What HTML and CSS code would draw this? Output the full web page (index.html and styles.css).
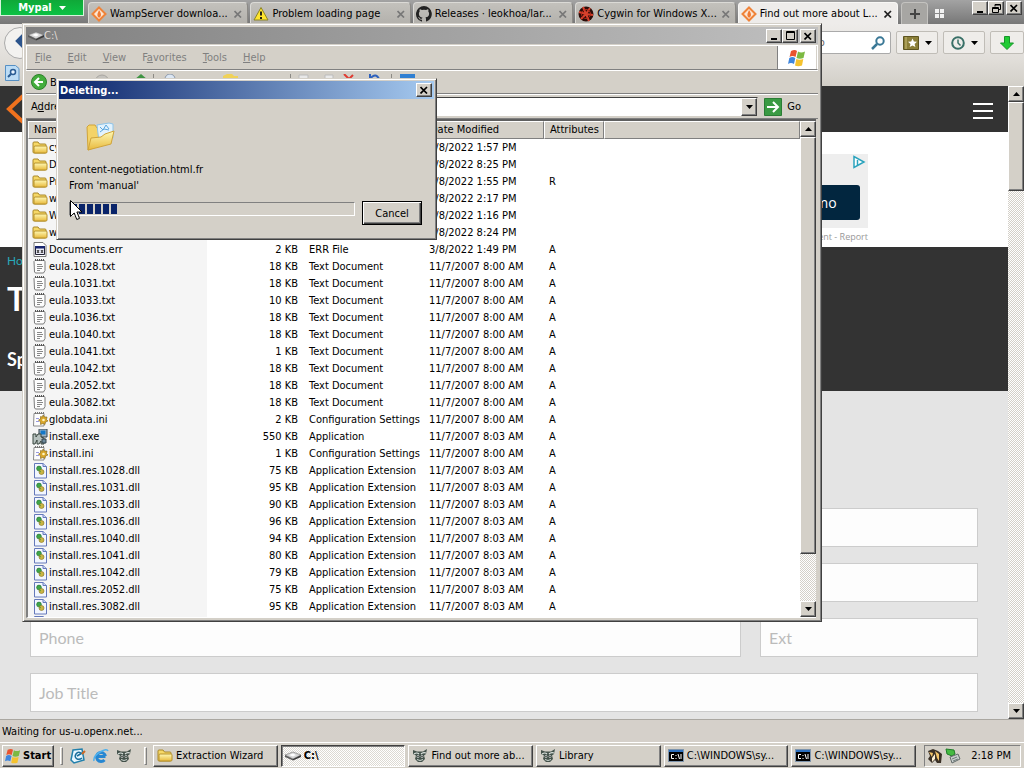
FILE: index.html
```html
<!DOCTYPE html>
<html lang="en">
  <head>
    <meta charset="utf-8">
    <title>Desktop</title>
    <link rel="stylesheet" href="styles.css">
    <meta name="viewport" content="width=device-width, initial-scale=1">
  </head>
  <body>
    <!-- shared icons -->
    <svg class="defs" width="0" height="0">
      <defs>
        <linearGradient id="gold" x1="0" y1="0" x2="0" y2="1">
          <stop offset="0" stop-color="#fff9b5"/>
          <stop offset="1" stop-color="#e8b93c"/>
        </linearGradient>
      </defs>
      <symbol id="folder" viewBox="0 0 16 16">
        <path d="M1 3q0-1 1-1h4l1.500 2H13q1 0 1 1v7q0 1-1 1H2q-1 0-1-1z" fill="#f6d867" stroke="#a8872a"/>
        <path d="M2.500 6H14q1 0 1 1v5q0 1-1 1H3q-1 0-1-1V7z" fill="url(#gold)" stroke="#b8922c"/>
      </symbol>
      <symbol id="errfile" viewBox="0 0 16 16">
        <path d="M2 .5h9l3 3v11H2z" fill="#fff" stroke="#777"/>
        <path d="M3.500 4.500h9v8h-9z" fill="#e8e8f4" stroke="#223"/>
        <path d="M3 4h10v2.500H3z" fill="#17246e"/>
        <path d="M5 8l2 3M7 8l-2 3M9 8l2 3M11 8l-2 3" stroke="#333"/>
      </symbol>
      <symbol id="txt" viewBox="0 0 16 16">
        <path d="M3 1.500h9q1 0 1 1v9l-1.500 2.500H4q-1 0-1.500-1L2 2.500z" fill="#fdfdfd" stroke="#7b7b7b"/>
        <path d="M3.500 0v2M5.500 0v2M7.500 0v2M9.500 0v2M11.500 0v2" stroke="#555"/>
        <path d="M5 5.500h5M5 7.500h6M5 9.500h5M5 11.500h3" stroke="#888"/>
      </symbol>
      <symbol id="ini" viewBox="0 0 16 16">
        <path d="M2 1.500h10v12.500H1.500z" fill="#fdfdfd" stroke="#8a8a8a"/>
        <path d="M3.500 0v2M5.500 0v2M7.500 0v2M9.500 0v2M11.500 0v2" stroke="#777"/>
        <path d="M4 6.500h3M4 9.500h3" stroke="#9a9ae0"/>
        <path d="M11 3l1.500 2H15l-.5 2.500L16 9l-2.500 1-.5 2.500-2-1L8.500 12.500V10l-2-2 2-1V4.500l2 .5z" fill="#d8a62a" stroke="#7e6218" stroke-width=".6"/>
        <circle cx="11.500" cy="8" r="1.300" fill="#fff4c0"/>
      </symbol>
      <symbol id="exe" viewBox="0 0 16 16">
        <path d="M7 0h8v8H7z" fill="#9fb3c2" stroke="#32424d"/>
        <path d="M8.500 1.500h5v4h-5z" fill="#1478c8"/>
        <path d="M1 5h3v3l2-3h3v3l3 1v6H9v-3l-2 3H5v-4l-2 4H1z" fill="#b5c0bd" stroke="#39463f"/>
        <path d="M10 10h4v4h-4z" fill="#6f8b9c" stroke="#32424d"/>
      </symbol>
      <symbol id="dll" viewBox="0 0 16 16">
        <path d="M2.500.5H11L14.500 3.500v11.500h-12z" fill="#f2f6ff" stroke="#6478ba"/>
        <path d="M11 .5v3h3.500" fill="#cad6f6" stroke="#6478ba"/>
        <circle cx="7" cy="5.500" r="2.400" fill="#3fa54a" stroke="#1e6e2b" stroke-width=".6"/>
        <circle cx="9.500" cy="9" r="2.500" fill="#c9b544" stroke="#85701d" stroke-width=".6"/>
        <path d="M6 7l3 2" stroke="#5b9a3d"/>
      </symbol>
      <symbol id="drive" viewBox="0 0 16 10">
        <path d="M0 4L8 1l8 3-8 4z" fill="#d6d6d6" stroke="#777" stroke-width=".6"/>
        <path d="M0 4v2l8 3.500V8z" fill="#5c5c5c"/>
        <path d="M16 4v2L8 9.500V8z" fill="#3a3a3a"/>
        <path d="M4 4l4-1.500L11 4 8 5.500z" fill="#fff"/>
      </symbol>
      <symbol id="flag" viewBox="0 0 20 18">
        <path d="M4 2q4-2 6 0L8.500 8q-3-2-6 0z" fill="#e8542f"/>
        <path d="M11 2.500q3 2 7 0L16.500 9q-4 1.500-7 0z" fill="#7cb942"/>
        <path d="M2.300 9q3-2 6 0L7 15q-3-2-6 0z" fill="#3f86dd"/>
        <path d="M9.300 10q3 1.500 7 0L15 16.500q-4 1.500-7 0z" fill="#f5c22d"/>
      </symbol>
      <symbol id="wamp" viewBox="0 0 16 16">
        <path d="M8 1.500l6.500 6.500L8 14.500 1.500 8z" fill="#fde6d3" stroke="#ef8339" stroke-width="2"/>
        <path d="M8 4q3 4 1.500 6.500T6.500 10q-.5-2 1.500-6z" fill="#ef7a34"/>
      </symbol>
      <symbol id="raccoon" viewBox="0 0 16 16">
        <path d="M1 2l4 1.500h6L15 1l-1 5-2 1.500 1 3.500-3 3H6l-3-3 1-3.500L1 6z" fill="#44524b"/>
        <path d="M2 6q3-2 5 0M14 5q-3-1-5 1" stroke="#dfe6e2" stroke-width="1.200" fill="none"/>
        <circle cx="6" cy="8.500" r="1.300" fill="#e8efeb"/>
        <circle cx="10" cy="8.500" r="1.300" fill="#e8efeb"/>
        <circle cx="6" cy="8.500" r=".7"/><circle cx="10" cy="8.500" r=".7"/>
        <path d="M5 11.500q3 2 6 0" stroke="#cdd6d1" fill="none"/>
      </symbol>
      <symbol id="cmd" viewBox="0 0 16 13">
        <path d="M.5.5h15v12H.5z" fill="#000" stroke="#7d94ad"/>
        <path d="M1 1h14v2H1z" fill="#2d70bf"/>
        <path d="M6 5.500H3.500v4H6M8 6v1M8 9v1M10 5l1.500 5M13 5v5" stroke="#fff" fill="none"/>
      </symbol>
      <symbol id="cross" viewBox="0 0 8 8">
        <path d="M.5 1l6.500 6.500M7 1L.5 7.500" stroke="currentColor" stroke-width="1.700"/>
      </symbol>
      <symbol id="up" viewBox="0 0 7 4"><path d="M0 4l3.500-4L7 4z"/></symbol>
      <symbol id="down" viewBox="0 0 7 4"><path d="M0 0h7L3.500 4z"/></symbol>
    </svg>

    <div class="browser">
      <div class="tab-strip">
        <button class="app-menu">Mypal <svg width="7" height="4" fill="#fff"><use href="#down"/></svg></button>
        <div class="tabs">
          <div class="tab"><svg class="icon"><use href="#wamp"/></svg><span>WampServer downloa...</span><button class="tab-close" aria-label="Close tab"><svg><use href="#cross"/></svg></button></div>
          <div class="tab">
            <svg class="icon" viewBox="0 0 16 16"><path d="M8 1.500L15 14H1z" fill="#ffe52e" stroke="#8b8425" stroke-linejoin="round"/><path d="M8 5.500v4M8 11v2" stroke="#111" stroke-width="1.800"/></svg>
            <span>Problem loading page</span><button class="tab-close" aria-label="Close tab"><svg><use href="#cross"/></svg></button>
          </div>
          <div class="tab">
            <svg class="icon" viewBox="0 0 16 16"><path fill="#222" d="M8 0a8 8 0 0 0-2.500 15.600c.4.100.500-.2.500-.4v-1.500c-2.200.5-2.700-.9-2.700-.9-.4-.9-.9-1.200-.9-1.200-.7-.5.100-.5.100-.5.800.1 1.200.8 1.200.8.700 1.300 1.900.9 2.300.7.100-.5.300-.9.500-1.100-1.800-.2-3.600-.9-3.600-4 0-.9.300-1.600.8-2.100-.1-.2-.4-1 .1-2.100 0 0 .7-.2 2.200.8a7.500 7.500 0 0 1 4 0c1.500-1 2.200-.8 2.200-.8.400 1.100.200 1.900.100 2.100.5.600.8 1.300.8 2.100 0 3.100-1.900 3.700-3.700 3.900.3.300.6.800.6 1.500v2.200c0 .2.100.5.600.4A8 8 0 0 0 8 0z"/></svg>
            <span>Releases · leokhoa/lar...</span><button class="tab-close" aria-label="Close tab"><svg><use href="#cross"/></svg></button>
          </div>
          <div class="tab">
            <svg class="icon" viewBox="0 0 16 16"><circle cx="8" cy="8" r="7.500" fill="#2b0c08"/><path d="M8 8L5 1M8 8l4-6M8 8l7 1M8 8l3 7M8 8l-5 5M8 8L1 6" stroke="#d8412c" stroke-width="2"/><circle cx="8" cy="8" r="4.500" fill="none" stroke="#b32a1c"/></svg>
            <span>Cygwin for Windows X...</span><button class="tab-close" aria-label="Close tab"><svg><use href="#cross"/></svg></button>
          </div>
          <div class="tab active"><svg class="icon"><use href="#wamp"/></svg><span>Find out more about L...</span><button class="tab-close" aria-label="Close tab"><svg><use href="#cross"/></svg></button></div>
        </div>
        <button class="new-tab" aria-label="New tab"><svg width="12" height="12"><path d="M6 1v10M1 6h10" stroke="#444" stroke-width="2"/></svg></button>
        <svg class="tab-groups" width="10" height="10"><path d="M0 0h4v4H0zM5 0h4v4H5zM0 5h4v4H0zM5 5h4v4H5z" fill="#f2f2f2"/></svg>
        <div class="win-buttons">
          <button class="win-btn" aria-label="Minimize"><svg width="9" height="9"><path d="M1 7h6v2H1z"/></svg></button>
          <button class="win-btn" aria-label="Restore"><svg width="9" height="9" fill="none" stroke="#000"><path d="M3 2.500V.5h5.500v5H7M3 1h5"/><path d="M.5 3.500h6v5h-6zM.5 4.500h6"/></svg></button>
          <button class="win-btn last" aria-label="Close"><svg width="8" height="8"><use href="#cross"/></svg></button>
        </div>
      </div>

      <div class="nav-bar">
        <button class="back" aria-label="Back"><svg width="16" height="16" fill="none" stroke="#2c548c" stroke-width="4"><path d="M9 2L3 8l6 6M3 8h12"/></svg></button>
        <input class="url" type="text" aria-label="Address">
        <div class="search">
          <input type="text" placeholder="DuckDuckGo" aria-label="Search">
          <svg width="14" height="14" fill="none" stroke="#3a7896" stroke-width="2"><circle cx="9" cy="5" r="3.700"/><path d="M6 8l-5 5" stroke-width="2.500"/></svg>
        </div>
        <button class="tool" aria-label="Bookmarks"><svg width="16" height="14"><path d="M.5.5h15v13H.5z" fill="#8b7f38" stroke="#5d541f"/><path d="M3 1v12" stroke="#c9bf78"/><path d="M9.500 2.500l1.400 3 3.100.3-2.400 2.100.8 3.200-2.900-1.700-2.800 1.700.8-3.200L5 5.800l3.200-.3z" fill="#fff"/></svg><svg width="7" height="4"><use href="#down"/></svg></button>
        <button class="tool" aria-label="History"><svg width="14" height="14" fill="none" stroke="#397067" stroke-width="2"><circle cx="7" cy="7" r="5.800"/><path d="M7 3.500V7l2.500 2.500" stroke-width="1.500"/></svg><svg width="7" height="4"><use href="#down"/></svg></button>
        <button class="tool download" aria-label="Downloads"><svg width="14" height="14"><path d="M4.500.5h5V7h4L7 13.500.5 7h4z" fill="#20cc34" stroke="#16952a"/></svg></button>
      </div>
      <div class="bookmarks">
        <svg width="15" height="16"><path d="M.5.500h10l3.500 3v12H.5z" fill="#bcdcf5" stroke="#5690c4"/><circle cx="8" cy="7" r="2.500" fill="#e9f5ff" stroke="#2b5d94" stroke-width="1.500"/><path d="M6 9l-3 3" stroke="#2b5d94" stroke-width="2"/></svg>
      </div>

      <div class="viewport">
        <div class="page">
          <header class="site-header">
            <svg width="30" height="32" fill="none" stroke="#f0721e" stroke-width="4"><path d="M19 3L5 16l14 13"/></svg>
            <button class="burger" aria-label="Menu"></button>
          </header>
          <div class="ad-row">
            <div class="ad">
              <svg width="14" height="14" fill="#fff" stroke="#2ba3bd" stroke-width="1.500"><path d="M2 1.500v11L12 7z"/><path d="M5.500 5v5"/></svg>
              <button class="ad-btn">Get a Demo</button>
            </div>
            <div class="ad-note">Advertisement - Report</div>
          </div>
          <div class="banner">
            <a href="#">Home</a>
            <h1>The</h1>
            <h2>Speak</h2>
          </div>
          <form class="contact">
            <input class="full" type="text" aria-label="Name">
            <input class="full" type="text" aria-label="Email">
            <input type="text" placeholder="Phone" aria-label="Phone">
            <input type="text" placeholder="Ext" aria-label="Ext">
            <input class="full" type="text" placeholder="Job Title" aria-label="Job Title">
          </form>
        </div>
        <div class="scrollbar page-scroll">
          <button class="win-btn" aria-label="Scroll up"><svg width="7" height="4"><use href="#up"/></svg></button>
          <div class="thumb"></div>
          <div class="track"></div>
          <button class="win-btn" aria-label="Scroll down"><svg width="7" height="4"><use href="#down"/></svg></button>
        </div>
      </div>
      <div class="status">Waiting for us-u.openx.net...</div>
    </div>

    <div class="taskbar">
      <button class="raised start"><svg width="18" height="16"><use href="#flag"/></svg>Start</button>
      <div class="divider"></div>
      <div class="quick">
        <svg class="icon" viewBox="0 0 16 16"><path d="M3 2l9-1 2 11-10 3-3-3z" fill="#e9f7ff" stroke="#2280ac" stroke-width="1.500"/><path d="M11 5Q8 3 6 6t1 5q3 1 5-1M7 8l7-4" fill="none" stroke="#1b6f9c" stroke-width="1.500"/><path d="M12 6l3-3" stroke="#d26b24" stroke-width="2"/></svg>
        <svg class="icon" viewBox="0 0 16 16"><path d="M12.500 8.500H4.500M12.500 8A4.500 4.500 0 1 0 11.500 12" fill="none" stroke="#2687d2" stroke-width="3"/><path d="M1 13Q0 8 7 4t8-1" fill="none" stroke="#4fb1ed" stroke-width="1.500"/></svg>
        <svg class="icon"><use href="#raccoon"/></svg>
      </div>
      <div class="divider"></div>
      <div class="tasks">
        <button class="raised"><svg class="icon"><use href="#folder"/></svg><span>Extraction Wizard</span></button>
        <button class="raised pressed"><svg width="16" height="10"><use href="#drive"/></svg><span>C:\</span></button>
        <button class="raised"><svg class="icon"><use href="#raccoon"/></svg><span>Find out more ab...</span></button>
        <button class="raised"><svg class="icon"><use href="#raccoon"/></svg><span>Library</span></button>
        <button class="raised"><svg width="16" height="13"><use href="#cmd"/></svg><span>C:\WINDOWS\sy...</span></button>
        <button class="raised"><svg width="16" height="13"><use href="#cmd"/></svg><span>C:\WINDOWS\sy...</span></button>
      </div>
      <div class="tray">
        <svg class="icon" viewBox="0 0 16 16"><path d="M1 3l5-2 5 2 4 3-1 9h-4l-2-3-3 3-4-4 2-3z" fill="#3a3026"/><path d="M2 4l4 1-1 4zM8 3l4 3v7l-2-3z" fill="#f3c46a"/><path d="M5 10l3-4v5l-3 3z" fill="#fff1d2"/></svg>
        <svg class="icon" viewBox="0 0 16 16"><path d="M1 1l8 1 1 4-3 2-5-2z" fill="#45ba42" stroke="#217c29"/><path d="M5 9l8-3 2 5-8 4z" fill="#c9cfce" stroke="#626b6a"/><path d="M7 11l5-2M8 13l5-2" stroke="#6f7a79"/></svg>
        <span>2:18 PM</span>
      </div>
    </div>

    <div class="window explorer">
      <div class="title-bar">
        <svg width="16" height="10"><use href="#drive"/></svg>
        <span>C:\</span>
        <button class="win-btn" aria-label="Minimize"><svg width="9" height="9"><path d="M1 7h6v2H1z"/></svg></button>
        <button class="win-btn" aria-label="Maximize"><svg width="9" height="9" fill="none" stroke="#000"><path d="M.5.5h8v8h-8zM0 1.500h9"/></svg></button>
        <button class="win-btn last" aria-label="Close"><svg width="8" height="8"><use href="#cross"/></svg></button>
      </div>
      <div class="menu-bar">
        <button><u>F</u>ile</button>
        <button><u>E</u>dit</button>
        <button><u>V</u>iew</button>
        <button>F<u>a</u>vorites</button>
        <button><u>T</u>ools</button>
        <button><u>H</u>elp</button>
        <div class="logo"><svg width="20" height="18"><use href="#flag"/></svg></div>
      </div>
      <div class="tool-bar">
        <button><svg class="icon" viewBox="0 0 16 16"><circle cx="8" cy="8" r="7.500" fill="#43ad3c" stroke="#2c8029"/><path d="M8 4L4 8l4 4M4 8h8" fill="none" stroke="#fff" stroke-width="2"/></svg>Back</button>
        <svg width="340" height="16">
          <circle cx="13" cy="8" r="7" fill="#c4c2bd" stroke="#a8a6a1"/>
          <path d="M45 6l7-6 7 6v8H45z" fill="#3f9443"/>
          <path d="M64.500 0v16M201.500 0v16M302.500 0v16" stroke="#8c8a85"/>
          <circle cx="81" cy="5" r="5" fill="#dbe6f3" stroke="#8b97a8"/>
          <path d="M134 2l4-2h5l2 2h4v9h-15z" fill="#f0d258"/>
          <path d="M210 1h9v9h-9zM236 1h8v9h-8z" fill="#e8e8e8" stroke="#bbb"/>
          <path d="M255 0l10 10M264 1l-9 9" stroke="#e03c33" stroke-width="2"/>
          <path d="M281 5q6-8 10 2M281 0v6h6" stroke="#2f62bd" stroke-width="2" fill="none"/>
          <path d="M311 0h15v10h-15z" fill="#2f7fd2"/>
        </svg>
      </div>
      <div class="address-bar">
        <label for="address">A<u>d</u>dress</label>
        <div class="combo">
          <input id="address" type="text">
          <button class="win-btn" aria-label="Show list"><svg width="7" height="4"><use href="#down"/></svg></button>
        </div>
        <button class="go"><svg width="18" height="18"><path d="M.5.5h17v17H.5z" fill="#3a9a43" stroke="#2a7d35"/><path d="M3 9h11M9 4l5 5-5 5" fill="none" stroke="#fff" stroke-width="2"/></svg>Go</button>
      </div>
      <div class="listing">
        <div class="files">
          <table>
            <thead>
              <tr><th class="name">Name</th><th class="size">Size</th><th class="type">Type</th><th class="date">Date Modified</th><th class="attr">Attributes</th><th></th></tr>
            </thead>
            <tbody id="file-rows"></tbody>
          </table>
        </div>
        <div class="scrollbar list-scroll">
          <button class="win-btn" aria-label="Scroll up"><svg width="7" height="4"><use href="#up"/></svg></button>
          <div class="thumb"></div>
          <div class="track"></div>
          <button class="win-btn" aria-label="Scroll down"><svg width="7" height="4"><use href="#down"/></svg></button>
        </div>
      </div>
    </div>

    <div class="window dialog">
      <div class="title-bar">
        <span>Deleting...</span>
        <button class="win-btn last" aria-label="Close"><svg width="8" height="8"><use href="#cross"/></svg></button>
      </div>
      <div class="dialog-body">
        <svg class="big-folder" width="32" height="32" viewBox="0 0 32 32">
          <path d="M2 7l2-2h6l2 3 12-3v17L3 30z" fill="#f4d368" stroke="#d0a43a"/>
          <path d="M12 5l12-2 4 1v14l-14 4z" fill="#e2f2fd" stroke="#8fc4e8"/>
          <path d="M15 7l3 3 3-5 3 4M15 12l4-3 5 1" stroke="#5ba6de" fill="none"/>
          <path d="M3 30l3-12 10-1 4-3 9-3-3 13z" fill="url(#gold)" stroke="#d0a43a"/>
        </svg>
        <p>content-negotiation.html.fr</p>
        <p>From 'manual'</p>
        <div class="progress-row">
          <progress value="17" max="100" aria-label="Deleting"></progress>
          <button class="cancel">Cancel</button>
        </div>
      </div>
    </div>

    <svg class="cursor" width="13" height="21"><path d="M.5.5v16l3.700-3.500 2.600 6.500 2.700-1.100L6.900 12h5.100z" fill="#fff" stroke="#000"/></svg>

    <script>
      let txt = "Text Document";
      let ext = "Application Extension";
      let oldDate = "11/7/2007 8:00 AM";
      let newDate = "11/7/2007 8:03 AM";

      // icon, name, size, type, date, attributes
      let files = [
        ["folder", "cygwin", "", "", "3/8/2022 1:57 PM", ""],
        ["folder", "Docs", "", "", "3/8/2022 8:25 PM", ""],
        ["folder", "Programs", "", "", "3/8/2022 1:55 PM", "R"],
        ["folder", "wamp", "", "", "3/8/2022 2:17 PM", ""],
        ["folder", "WINDOWS", "", "", "3/8/2022 1:16 PM", ""],
        ["folder", "wmpub", "", "", "3/8/2022 8:24 PM", ""],
        ["errfile", "Documents.err", "2 KB", "ERR File", "3/8/2022 1:49 PM", "A"],
        ["txt", "eula.1028.txt", "18 KB", txt, oldDate, "A"],
        ["txt", "eula.1031.txt", "18 KB", txt, oldDate, "A"],
        ["txt", "eula.1033.txt", "10 KB", txt, oldDate, "A"],
        ["txt", "eula.1036.txt", "18 KB", txt, oldDate, "A"],
        ["txt", "eula.1040.txt", "18 KB", txt, oldDate, "A"],
        ["txt", "eula.1041.txt", "1 KB", txt, oldDate, "A"],
        ["txt", "eula.1042.txt", "18 KB", txt, oldDate, "A"],
        ["txt", "eula.2052.txt", "18 KB", txt, oldDate, "A"],
        ["txt", "eula.3082.txt", "18 KB", txt, oldDate, "A"],
        ["ini", "globdata.ini", "2 KB", "Configuration Settings", oldDate, "A"],
        ["exe", "install.exe", "550 KB", "Application", newDate, "A"],
        ["ini", "install.ini", "1 KB", "Configuration Settings", oldDate, "A"],
        ["dll", "install.res.1028.dll", "75 KB", ext, newDate, "A"],
        ["dll", "install.res.1031.dll", "95 KB", ext, newDate, "A"],
        ["dll", "install.res.1033.dll", "90 KB", ext, newDate, "A"],
        ["dll", "install.res.1036.dll", "96 KB", ext, newDate, "A"],
        ["dll", "install.res.1040.dll", "94 KB", ext, newDate, "A"],
        ["dll", "install.res.1041.dll", "80 KB", ext, newDate, "A"],
        ["dll", "install.res.1042.dll", "79 KB", ext, newDate, "A"],
        ["dll", "install.res.2052.dll", "75 KB", ext, newDate, "A"],
        ["dll", "install.res.3082.dll", "95 KB", ext, newDate, "A"],
        ["dll", "", "", "", "", ""]
      ];

      document.getElementById("file-rows").innerHTML = files.map(function(f) {
        return '<tr><td class="name"><svg class="icon"><use href="#' + f[0] + '"/></svg><span>' + f[1] + '</span></td>' +
          '<td class="size">' + f[2] + '</td><td>' + f[3] + '</td><td>' + f[4] + '</td><td>' + f[5] + '</td><td></td></tr>';
      }).join("");
    </script>
  </body>
</html>
```
FILE: styles.css
```css
* {
  box-sizing: border-box;
  margin: 0;
  padding: 0;
}
body {
  height: 100vh;
  display: flex;
  flex-direction: column;
  overflow: hidden;
  background: #d4d0c8;
  color: #000;
  font: 11px/13px "DejaVu Sans Condensed", Tahoma, sans-serif;
}
button, input {
  font: inherit;
  color: inherit;
  border: none;
  background: none;
}
svg {
  flex: none;
}
.defs {
  position: absolute;
}
.icon {
  width: 16px;
  height: 16px;
}

/* classic 3d buttons */
.win-btn {
  flex: none;
  width: 16px;
  height: 14px;
  display: flex;
  align-items: center;
  justify-content: center;
  background: #d4d0c8;
  color: #000;
  border: 1px solid;
  border-color: #fff #404040 #404040 #fff;
  box-shadow: inset -1px -1px #808080;
}
.win-btn.last {
  margin-left: 2px;
}
.raised {
  background: #d4d0c8;
  border: 1px solid;
  border-color: #fff #404040 #404040 #fff;
  box-shadow: inset -1px -1px #808080;
}
.pressed {
  background: repeating-conic-gradient(#fff 0 25%, #dcd9d2 0 50%) 0 0 / 2px 2px;
  border-color: #404040 #fff #fff #404040;
  box-shadow: inset 1px 1px #808080;
  font-weight: bold;
}

/* browser */
.browser {
  flex: 1;
  min-height: 0;
  display: flex;
  flex-direction: column;
}
.tab-strip {
  height: 24px;
  flex: none;
  display: flex;
  background: linear-gradient(#a3a3a3, #777);
}
.app-menu {
  width: 84px;
  height: 16px;
  margin-right: 4px;
  background: linear-gradient(#0fa838, #0cc244);
  border: 1px solid #d8f5dc;
  border-top: none;
  color: #fff;
  font-weight: bold;
  display: flex;
  align-items: center;
  justify-content: center;
  gap: 7px;
}
.tabs {
  flex: 1;
  min-width: 0;
  display: flex;
  gap: 2px;
  padding-top: 2px;
}
.tab {
  flex: 1;
  min-width: 0;
  display: flex;
  align-items: center;
  gap: 3px;
  padding: 0 5px 0 2px;
  background: linear-gradient(#c3c1bc, #b3b1ac);
  border: 1px solid #dbdad6;
  border-bottom: none;
  border-right-color: #8c8a86;
  border-radius: 4px 4px 0 0;
  white-space: nowrap;
}
.tab span {
  flex: 1;
  min-width: 0;
  overflow: hidden;
}
.tab.active {
  background: #eeecea;
  border-color: #f8f7f5;
}
.tab-close {
  width: 8px;
  height: 8px;
  display: flex;
  color: #777;
}
.tab-close svg {
  width: 8px;
  height: 8px;
}
.active .tab-close {
  color: #222;
}
.new-tab {
  width: 27px;
  margin: 2px 7px 0 3px;
  display: flex;
  align-items: center;
  justify-content: center;
  background: #a7a6a3;
  border: 1px solid #c4c3c0;
  border-bottom: none;
  border-radius: 4px 4px 0 0;
}
.tab-groups {
  margin: 9px 27px 0 0;
}
.win-buttons {
  display: flex;
  padding: 1px 2px 0 0;
}
.nav-bar {
  flex: none;
  height: 37px;
  display: flex;
  align-items: center;
  gap: 5px;
  padding-left: 4px;
  background: linear-gradient(#eeecea, #e0ddd8);
}
.back {
  width: 32px;
  height: 32px;
  padding-left: 6px;
  border: 1px solid #aaa;
  border-radius: 50%;
  background: #f3f2f0;
}
.url {
  flex: 1;
  min-width: 0;
  height: 23px;
  background: #fff;
  border: 1px solid #aaa;
}
.search {
  width: 140px;
  height: 23px;
  display: flex;
  align-items: center;
  padding: 0 5px;
  background: #fff;
  border: 1px solid #aaa;
  border-radius: 2px;
}
.search input {
  flex: 1;
  min-width: 0;
  padding-left: 4px;
}
.search input::placeholder {
  color: #666;
}
.tool {
  width: 42px;
  height: 23px;
  display: flex;
  align-items: center;
  justify-content: center;
  gap: 6px;
  background: #efedea;
  border: 1px solid #c0bdb7;
  border-radius: 2px;
}
.download {
  width: 34px;
}
.bookmarks {
  flex: none;
  height: 25px;
  padding: 4px 5px;
  background: linear-gradient(#e0ddd8, #d2cfc8);
}
.viewport {
  flex: 1;
  min-height: 0;
  display: flex;
  border-bottom: 1px solid #aaa7a1;
}
.page {
  flex: 1;
  min-width: 0;
  overflow: hidden;
  background: #e4e4e4;
  font-family: Lato, sans-serif;
}
.site-header {
  height: 46px;
  display: flex;
  align-items: center;
  justify-content: space-between;
  padding: 0 15px 0 4px;
  background: #333;
}
.burger {
  width: 20px;
  height: 16px;
  margin-top: 3px;
  background: linear-gradient(#fff 0 2px, transparent 2px 7px, #fff 7px 9px, transparent 9px 14px, #fff 14px);
}
.ad-row {
  height: 115px;
  padding-top: 22px;
  background: #fff;
}
.ad {
  max-width: 728px;
  height: 74px;
  margin: 0 auto;
  display: flex;
  flex-direction: column;
  align-items: flex-end;
  background: #eee;
}
.ad > svg {
  margin: 1px 2px 0 0;
}
.ad-btn {
  width: 130px;
  height: 35px;
  margin: 16px 8px 0 0;
  padding-left: 6px;
  background: #02263f;
  color: #fff;
  border-radius: 3px;
  font: 14px "Open Sans", sans-serif;
}
.ad-note {
  max-width: 728px;
  margin: 0 auto;
  text-align: right;
  color: #999;
  font: 9px/18px "Open Sans", sans-serif;
}
.banner {
  height: 144px;
  padding: 6px 7px;
  background: #333;
  color: #fff;
}
.banner a {
  color: #28a8b8;
  font-size: 12px;
  line-height: 16px;
  text-decoration: none;
}
.banner h1 {
  margin-top: 12px;
  font-size: 32px;
  line-height: 36px;
}
.banner h2 {
  margin-top: 30px;
  font-size: 18px;
  line-height: 24px;
}
.contact {
  display: grid;
  grid-template-columns: 711fr 218fr;
  gap: 16px 19px;
  padding: 117px 30px 0;
}
.contact input {
  min-width: 0;
  height: 39px;
  padding: 0 8px;
  background: #fdfdfd;
  border: 1px solid #ccc;
  font-size: 16px;
}
.contact input::placeholder {
  color: #bbb;
}
.contact .full {
  grid-column: 1 / -1;
}
.status {
  flex: none;
  height: 22px;
  padding: 5px 2px;
  background: #d5d0ca;
}

/* scrollbars */
.scrollbar {
  flex: none;
  width: 16px;
  display: flex;
  flex-direction: column;
}
.scrollbar .win-btn {
  height: 16px;
}
.thumb {
  background: #d4d0c8;
  border: 1px solid;
  border-color: #fff #404040 #404040 #fff;
  box-shadow: inset -1px -1px #808080;
}
.track {
  flex: 1;
  background: repeating-conic-gradient(#fff 0 25%, #d4d0c8 0 50%) 0 0 / 2px 2px;
}
.page-scroll .thumb {
  height: 14%;
}
.list-scroll .thumb {
  height: 84%;
}

/* taskbar */
.taskbar {
  flex: none;
  height: 26px;
  display: flex;
  align-items: center;
  padding: 0 3px 0 2px;
  border-top: 1px solid #fff;
}
.start {
  width: 52px;
  height: 22px;
  display: flex;
  align-items: center;
  gap: 1px;
  padding-left: 1px;
  font-weight: bold;
}
.divider {
  width: 3px;
  height: 18px;
  margin: 0 6px;
  border: 1px solid;
  border-color: #fff #808080 #808080 #fff;
}
.quick {
  display: flex;
  gap: 7px;
  padding: 0 6px 0 1px;
}
.tasks {
  flex: 1;
  min-width: 0;
  display: flex;
  gap: 3px;
}
.tasks .raised {
  flex: 1;
  min-width: 0;
  height: 22px;
  display: flex;
  align-items: center;
  gap: 3px;
  padding: 0 3px;
  white-space: nowrap;
}
.tasks span {
  overflow: hidden;
}
.tray {
  height: 22px;
  display: flex;
  align-items: center;
  gap: 2px;
  margin-left: 8px;
  padding: 0 9px 0 2px;
  border: 1px solid;
  border-color: #808080 #fff #fff #808080;
}
.tray span {
  margin-left: 8px;
}

/* windows over the desktop */
.window {
  position: absolute;
  display: flex;
  flex-direction: column;
  padding: 2px;
  background: #d4d0c8;
  border: 1px solid;
  border-color: #d4d0c8 #404040 #404040 #d4d0c8;
  box-shadow: inset 1px 1px #fff, inset -1px -1px #808080;
}
.title-bar {
  flex: none;
  height: 18px;
  display: flex;
  align-items: center;
  padding-right: 2px;
}
.title-bar span {
  flex: 1;
}
.explorer {
  left: 22px;
  top: 23px;
  width: 800px;
  height: 599px;
  padding: 3px;
}
.explorer .title-bar {
  height: 17px;
  padding-left: 2px;
  background: linear-gradient(90deg, #808080, #c0c0c0);
  color: #e0ddd8;
}
.menu-bar {
  flex: none;
  height: 25px;
  display: flex;
  align-items: center;
  gap: 16px;
  margin-top: 1px;
  padding-left: 8px;
  border: 1px solid #fff;
  border-bottom-color: #808080;
  color: #808080;
}
.logo {
  height: 100%;
  width: 39px;
  margin: 0 1px 0 auto;
  display: flex;
  align-items: center;
  justify-content: center;
  background: #fff;
  border-left: 1px solid #808080;
}
.tool-bar {
  flex: none;
  height: 24px;
  display: flex;
  align-items: center;
  gap: 15px;
  padding-left: 5px;
  border-top: 1px solid #fff;
  border-bottom: 1px solid #808080;
}
.tool-bar button {
  display: flex;
  align-items: center;
  gap: 3px;
}
.address-bar {
  flex: none;
  height: 25px;
  display: flex;
  align-items: center;
  gap: 6px;
  padding: 0 17px 0 5px;
  border-top: 1px solid #fff;
  border-bottom: 1px solid #808080;
}
.combo {
  flex: 1;
  height: 20px;
  display: flex;
  background: #fff;
  border: 1px solid;
  border-color: #404040 #d4d0c8 #d4d0c8 #404040;
}
.combo input {
  flex: 1;
  min-width: 0;
}
.combo .win-btn {
  height: 18px;
}
.go {
  display: flex;
  align-items: center;
  gap: 5px;
}
.listing {
  flex: 1;
  min-height: 0;
  display: flex;
  margin-right: 2px;
  background: #fff;
  border: 2px solid;
  border-color: #606060 #fff #fff #808080;
  border-right-width: 0;
  border-bottom-width: 1px;
}
.files {
  flex: 1;
  min-width: 0;
  overflow: hidden;
}
table {
  width: 100%;
  table-layout: fixed;
  border-collapse: separate;
  border-spacing: 0;
}
th {
  height: 18px;
  padding: 0 5px;
  background: #d4d0c8;
  border: 1px solid;
  border-color: #fff #808080 #808080 #fff;
  font-weight: normal;
  text-align: left;
  line-height: 16px;
}
td {
  height: 17px;
  padding: 0 5px;
  white-space: nowrap;
  line-height: 17px;
}
th.name {
  width: 179px;
}
td.name {
  display: flex;
  align-items: center;
  gap: 1px;
  padding: 0 4px;
  background: #f5f5f5;
}
.size {
  width: 97px;
  padding-right: 6px;
  text-align: right;
}
.type {
  width: 120px;
}
.date {
  width: 120px;
}
.attr {
  width: 60px;
}

.dialog {
  left: 56px;
  top: 78px;
  width: 381px;
}
.dialog .title-bar {
  background: linear-gradient(90deg, #0a246a, #a6caf0);
  color: #fff;
  font-weight: bold;
  padding-left: 1px;
}
.dialog-body {
  padding: 21px 12px 12px 10px;
}
.dialog-body p {
  line-height: 16px;
}
.big-folder {
  display: block;
  margin: 0 0 10px 16px;
}
.progress-row {
  display: flex;
  align-items: flex-start;
  gap: 7px;
  padding-top: 7px;
}
progress {
  flex: 1;
  min-width: 0;
  height: 14px;
  margin-top: 1px;
  padding: 1px;
  appearance: none;
  border: 1px solid;
  border-color: #808080 #fff #fff #808080;
}
progress::-webkit-progress-bar {
  background: #d4d0c8;
}
progress::-webkit-progress-value {
  background: repeating-linear-gradient(90deg, #0a246a 0 6px, #d4d0c8 6px 8px);
}
.cancel {
  width: 60px;
  height: 24px;
  background: #d4d0c8;
  border: 1px solid #000;
  box-shadow: inset 1px 1px #fff, inset -1px -1px #404040, inset -2px -2px #808080;
}
.cursor {
  position: absolute;
  left: 70px;
  top: 200px;
}
```
